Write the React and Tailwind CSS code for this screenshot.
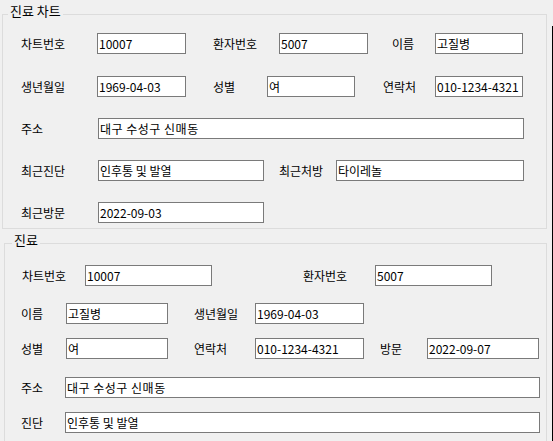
import React from "react";

const Box = ({ w, children }) => (
  <div
    className={`${w} h-[21px] shrink-0 border border-[#7a7a7a] bg-white pl-[1px] flex items-center text-[12px] leading-none whitespace-nowrap overflow-hidden text-black`}
  >
    {children}
  </div>
);

const Label = ({ c, children }) => (
  <div className={`${c} shrink-0 text-[12px] leading-none whitespace-nowrap text-black`}>
    {children}
  </div>
);

const Row = ({ mt, children }) => (
  <div className={`${mt} h-[21px] flex items-center`}>{children}</div>
);

export default function App() {
  return (
    <div className="w-[553px] h-[441px] bg-[#f0f0f0] overflow-hidden flex font-['Noto_Sans_CJK_KR',sans-serif]">
      <div className="w-[552px] flex flex-col pt-[14px]">
        {/* Group 1 */}
        <div className="relative ml-[2px] w-[545px] h-[215px] shrink-0 border border-[#dcdcdc]">
          <div className="absolute top-[-11px] left-[5px] px-[2px] bg-[#f0f0f0] text-[13px] leading-[14px] whitespace-nowrap text-black">
            진료 차트
          </div>
          <Row mt="mt-[18px]">
            <Label c="ml-[18px] w-[76px]">차트번호</Label>
            <Box w="w-[89px]">10007</Box>
            <Label c="ml-[27px] w-[66px]">환자번호</Label>
            <Box w="w-[89px]">5007</Box>
            <Label c="ml-[24px] w-[43px]">이름</Label>
            <Box w="w-[88px]">고질병</Box>
          </Row>
          <Row mt="mt-[22px]">
            <Label c="ml-[18px] w-[76px]">생년월일</Label>
            <Box w="w-[89px]">1969-04-03</Box>
            <Label c="ml-[27px] w-[54px]">성별</Label>
            <Box w="w-[88px]">여</Box>
            <Label c="ml-[28px] w-[52px]">연락처</Label>
            <Box w="w-[88px]">010-1234-4321</Box>
          </Row>
          <Row mt="mt-[21px]">
            <Label c="ml-[18px] w-[77px]">주소</Label>
            <Box w="w-[426px]"><span className="tracking-[0.5px]">대구 수성구 신매동</span></Box>
          </Row>
          <Row mt="mt-[21px]">
            <Label c="ml-[18px] w-[77px]">최근진단</Label>
            <Box w="w-[166px]">인후통 및 발열</Box>
            <Label c="ml-[15px] w-[57px]">최근처방</Label>
            <Box w="w-[188px]">타이레놀</Box>
          </Row>
          <Row mt="mt-[21px]">
            <Label c="ml-[18px] w-[77px]">최근방문</Label>
            <Box w="w-[166px]">2022-09-03</Box>
          </Row>
        </div>

        {/* Group 2 */}
        <div className="relative mt-[14px] ml-[4px] w-[543px] h-[230px] shrink-0 border border-[#dcdcdc]">
          <div className="absolute top-[-11px] left-[7px] px-[2px] bg-[#f0f0f0] text-[13px] leading-[14px] whitespace-nowrap text-black">
            진료
          </div>
          <Row mt="mt-[21px]">
            <Label c="ml-[17px] w-[63px]">차트번호</Label>
            <Box w="w-[127px]">10007</Box>
            <Label c="ml-[91px] w-[72px]">환자번호</Label>
            <Box w="w-[117px]">5007</Box>
          </Row>
          <Row mt="mt-[17px]">
            <Label c="ml-[16px] w-[45px]">이름</Label>
            <Box w="w-[102px]">고질병</Box>
            <Label c="ml-[26px] w-[61px]">생년월일</Label>
            <Box w="w-[109px]">1969-04-03</Box>
          </Row>
          <Row mt="mt-[14px]">
            <Label c="ml-[16px] w-[45px]">성별</Label>
            <Box w="w-[102px]">여</Box>
            <Label c="ml-[26px] w-[61px]">연락처</Label>
            <Box w="w-[109px]">010-1234-4321</Box>
            <Label c="ml-[16px] w-[47px]">방문</Label>
            <Box w="w-[112px]">2022-09-07</Box>
          </Row>
          <Row mt="mt-[18px]">
            <Label c="ml-[16px] w-[44px]">주소</Label>
            <Box w="w-[475px]"><span className="tracking-[0.5px]">대구 수성구 신매동</span></Box>
          </Row>
          <Row mt="mt-[14px]">
            <Label c="ml-[16px] w-[44px]">진단</Label>
            <Box w="w-[475px]">인후통 및 발열</Box>
          </Row>
        </div>
      </div>
      <div className="w-px shrink-0 flex flex-col">
        <div className="h-[26px] shrink-0" />
        <div className="flex-1 bg-black" />
      </div>
    </div>
  );
}
